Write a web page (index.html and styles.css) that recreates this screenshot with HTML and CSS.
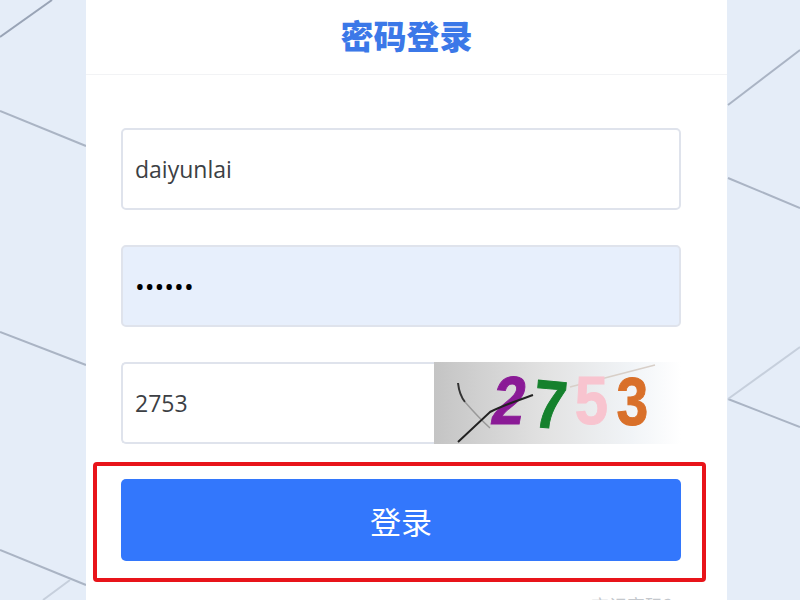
FILE: index.html
```html
<!DOCTYPE html>
<html lang="zh-CN">
<head>
<meta charset="utf-8">
<title>密码登录</title>
<link rel="stylesheet" href="styles.css">
</head>
<body>
<svg class="bg-lines" width="800" height="600" viewBox="0 0 800 600" aria-hidden="true">
  <path class="line dark" d="M0 37L52 0"/>
  <path class="line" d="M0 111L86 146"/>
  <path class="line" d="M0 332L86 365"/>
  <path class="line" d="M0 550L86 585"/>
  <path class="line light" d="M70 580L43 600"/>
  <path class="line" d="M728 105L800 50"/>
  <path class="line" d="M728 178L800 208"/>
  <path class="line" d="M728 399L800 427"/>
  <path class="line light" d="M728 399L800 347"/>
</svg>
<main class="card">
  <h1 class="title">密码登录</h1>
  <form class="form">
    <input class="field" type="text" value="daiyunlai">
    <input class="field filled" type="password" value="123456">
    <div class="captcha-row">
      <input class="field captcha-input" type="text" value="2753">
      <div class="captcha">
        <svg class="captcha-lines" width="246" height="82" viewBox="0 0 246 82" aria-hidden="true">
          <path class="noise-a" d="M24 21C25 30 27 35 31 40"/>
          <path class="noise-d" d="M31 40C38 48 46 57 56 66"/>
          <path class="noise-c" d="M136 25L221 3"/>
        </svg>
        <span class="digit d1">2</span>
        <span class="digit d2">7</span>
        <span class="digit d3">5</span>
        <span class="digit d4">3</span>
        <svg class="captcha-lines" width="246" height="82" viewBox="0 0 246 82" aria-hidden="true">
          <path class="noise-b" d="M24 80L56 50C70 43 85 38 99 33"/>
        </svg>
      </div>
    </div>
    <div class="submit-wrap">
      <button class="submit" type="button">登录</button>
    </div>
    <a class="forgot">忘记密码？</a>
  </form>
</main>
</body>
</html>
```
FILE: styles.css
```css
html, body {
  margin: 0;
  height: 600px;
  overflow: hidden;
}
body {
  background: #e5edf8;
  font-family: "Open Sans", "Noto Sans CJK SC", sans-serif;
  display: flex;
  justify-content: center;
  position: relative;
}
.bg-lines {
  position: absolute;
  left: 0;
  top: 0;
}
.line {
  stroke: #aab4c4;
  stroke-width: 2;
  fill: none;
}
.line.dark { stroke: #99a4b6; }
.line.light { stroke: #c6cfdc; }

.card {
  position: relative;
  width: 641px;
  height: 600px;
  margin-left: 13px;
  background: #fff;
  flex: none;
}
.title {
  margin: 0;
  height: 75px;
  box-sizing: border-box;
  border-bottom: 1px solid #f2f3f5;
  text-align: center;
  font: 900 33px/71px "Noto Sans CJK SC", sans-serif;
  color: #3b78e8;
}
.form {
  display: flex;
  flex-direction: column;
  gap: 35px;
  padding: 53px 46px 0 35px;
}
.field {
  box-sizing: border-box;
  width: 100%;
  height: 82px;
  padding: 0 12px;
  border: 2px solid #dfe3ec;
  border-radius: 5px;
  background: #fff;
  color: #3c3f44;
  font: 23px "Open Sans", sans-serif;
  outline: none;
}
.field.filled {
  background: #e7effc;
  color: #000;
  font-size: 26px;
}
.captcha-row {
  display: flex;
  height: 82px;
}
.captcha-input {
  width: 313px;
  flex: none;
  border-right: 0;
  border-radius: 5px 0 0 5px;
}
.captcha {
  position: relative;
  flex: 1;
  display: flex;
  align-items: center;
  padding-left: 60px;
  gap: 10px;
  background: linear-gradient(90deg, #c4c4c4 0%, #e2e2e2 45%, #f1f4f7 80%, #fff 100%);
  font: bold 68px/82px "Liberation Sans", sans-serif;
  -webkit-text-stroke: 1px currentColor;
}
.captcha-lines {
  position: absolute;
  left: 0;
  top: 0;
}
.noise-a { fill: none; stroke: #333; stroke-width: 2; }
.noise-d { fill: none; stroke: #999; stroke-width: 1.5; }
.noise-b { fill: none; stroke: #222; stroke-width: 2; }
.noise-c { fill: none; stroke: #d8cfc8; stroke-width: 1.5; }
.digit {
  position: relative;
  width: 31px;
  display: flex;
  justify-content: center;
}
.d1 { color: #8a1a96; transform: translateY(-3px) skewX(-10deg) scaleX(.86); }
.d2 { color: #15812d; transform: translateY(1px) rotate(5deg) scaleX(.88); }
.d3 { color: #f8c4cf; transform: translateY(-3px) scaleX(.88); }
.d4 { color: #d9702a; transform: translateY(-2px) scaleX(.84); }

.submit-wrap {
  position: relative;
}
.submit-wrap::after {
  content: "";
  position: absolute;
  left: -28px;
  right: -25px;
  top: -17px;
  bottom: -21px;
  border: 4px solid #e8141a;
  border-radius: 4px;
  pointer-events: none;
}
.submit {
  display: block;
  width: 100%;
  height: 82px;
  border: 0;
  border-radius: 5px;
  background: #3377fc;
  color: #fff;
  font: 31px "Noto Sans CJK SC", sans-serif;
}
.forgot {
  align-self: flex-end;
  margin-top: -3px;
  color: #c4c8cd;
  font: 18px/24px "Noto Sans CJK SC", sans-serif;
}
```
